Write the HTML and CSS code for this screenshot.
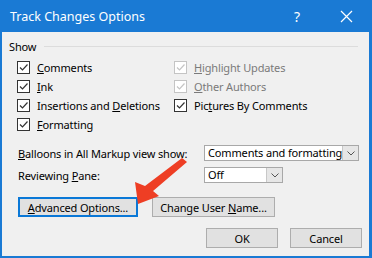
FILE: index.html
```html
<!DOCTYPE html>
<html lang="en">

<head>
  <meta charset="UTF-8">
  <title>Track Changes Options</title>
  <link rel="stylesheet" href="styles.css">
</head>

<body>
  <div class="dialog">
    <div class="titlebar">
      <span class="title">Track Changes Options</span>
      <span class="help">?</span>
      <span class="close">
        <svg width="13" height="13" viewBox="0 0 13 13"><path d="M1 1 L12 12 M12 1 L1 12" stroke="#fff" stroke-width="1.2" fill="none"/></svg>
      </span>
    </div>
    <div class="content">
      <div class="group-head">
        <span>Show</span>
        <div class="rule"></div>
      </div>
      <div class="checks">
        <label class="check"><span class="box"></span><span><u>C</u>omments</span></label>
        <label class="check off"><span class="box"></span><span><u>H</u>ighlight Updates</span></label>
        <label class="check"><span class="box"></span><span><u>I</u>nk</span></label>
        <label class="check off"><span class="box"></span><span><u>O</u>ther Authors</span></label>
        <label class="check"><span class="box"></span><span>Insertions and <u>D</u>eletions</span></label>
        <label class="check"><span class="box"></span><span>Pic<u>t</u>ures By Comments</span></label>
        <label class="check"><span class="box"></span><span><u>F</u>ormatting</span></label>
      </div>
      <div class="field first">
        <span class="field-label"><u>B</u>alloons in All Markup view show:</span>
        <div class="select wide"><span class="value">Comments and formatting</span><span class="drop"></span></div>
      </div>
      <div class="field">
        <span class="field-label">Reviewing <u>P</u>ane:</span>
        <div class="select narrow"><span class="value">Off</span><span class="drop"></span></div>
      </div>
      <div class="row-btns">
        <button class="btn default adv"><u>A</u>dvanced Options...</button>
        <button class="btn user">Change User <u>N</u>ame...</button>
      </div>
      <div class="footer">
        <button class="btn ok">OK</button>
        <button class="btn cancel">Cancel</button>
      </div>
    </div>
    <svg class="arrow" width="60" height="54" viewBox="0 0 60 54">
      <path d="M50 3 L55 7 L21 36 L27 41 L6 49 L3 27 L13 31 Z" fill="#ee3e24"/>
    </svg>
  </div>
</body>

</html>
```

FILE: styles.css
```css
* {
  padding: 0;
  margin: 0;
  box-sizing: border-box;
}

body {
  width: 372px;
  height: 258px;
  overflow: hidden;
  font-family: "Noto Sans", "Open Sans", sans-serif;
  font-size: 11px;
  letter-spacing: -0.15px;
  color: #000;
}

.dialog {
  position: relative;
  width: 372px;
  height: 258px;
  background-color: #f0f0f0;
  border: 2px solid #1a7ad4;
  border-top: 0;
  border-right-width: 3px;
  display: flex;
  flex-direction: column;
}

.titlebar {
  flex-shrink: 0;
  height: 32px;
  margin: 0 -3px 0 -2px;
  background-color: #1a7ad4;
  color: #fff;
  display: flex;
  align-items: center;
  padding-left: 10px;
}

.title {
  font-size: 12.5px;
  letter-spacing: 0;
  flex: 1;
}

.help {
  font-size: 14px;
  width: 20px;
  margin-right: 26px;
}

.close {
  width: 13px;
  margin-right: 19px;
  display: flex;
}

.content {
  padding: 6px 7px 0 7px;
  flex: 1;
  white-space: nowrap;
}

.group-head {
  display: flex;
  align-items: center;
  height: 16px;
}

.rule {
  flex: 1;
  height: 1px;
  background-color: #dcdcdc;
  margin-left: 8px;
  margin-right: 4px;
}

.checks {
  display: grid;
  grid-template-columns: 157px 1fr;
  grid-auto-rows: 19px;
  padding-left: 8px;
  margin-top: 4px;
}

.check {
  display: flex;
  align-items: center;
}

.box {
  flex-shrink: 0;
  width: 13px;
  height: 13px;
  border: 1px solid #333;
  background: #fff url("data:image/svg+xml,%3Csvg xmlns='http://www.w3.org/2000/svg' width='11' height='11'%3E%3Cpath d='M2 5.5 L4.5 8 L9.5 2.5' stroke='%23333' stroke-width='1.2' fill='none'/%3E%3C/svg%3E") no-repeat center;
  margin-right: 7px;
}

.check.off {
  color: #7a7a7a;
}

.check.off .box {
  border-color: #c4c4c4;
  background: #fff url("data:image/svg+xml,%3Csvg xmlns='http://www.w3.org/2000/svg' width='11' height='11'%3E%3Cpath d='M2 5.5 L4.5 8 L9.5 2.5' stroke='%23c4c4c4' stroke-width='1.2' fill='none'/%3E%3C/svg%3E") no-repeat center;
}

.field {
  display: flex;
  align-items: center;
  padding-left: 9px;
  margin-top: 6px;
}

.field.first {
  margin-top: 11px;
}

.field-label {
  width: 186px;
}

.select {
  display: flex;
  height: 16px;
  border: 1px solid #a8a8a8;
  background-color: #fff;
}

.select.wide {
  width: 155px;
}

.select.narrow {
  width: 79px;
}

.value {
  flex: 1;
  padding-left: 3px;
  line-height: 14px;
}

.drop {
  width: 16px;
  border-left: 1px solid #c8c8c8;
  background: #e6e6e6 url("data:image/svg+xml,%3Csvg xmlns='http://www.w3.org/2000/svg' width='8' height='5'%3E%3Cpath d='M0.5 0.5 L4 4 L7.5 0.5' stroke='%23555' fill='none'/%3E%3C/svg%3E") no-repeat center;
}

.btn {
  font-family: inherit;
  font-size: 11px;
  letter-spacing: -0.15px;
  height: 20px;
  background-color: #e1e1e1;
  border: 1px solid #adadad;
  color: #000;
}

.btn.default {
  border: 2px solid #0a78d7;
}

.row-btns {
  display: flex;
  gap: 14px;
  padding-left: 9px;
  margin-top: 14px;
}

.adv {
  width: 120px;
}

.user {
  width: 123px;
}

.footer {
  display: flex;
  justify-content: flex-end;
  gap: 12px;
  margin-top: 11px;
}

.ok,
.cancel {
  width: 72px;
}

.arrow {
  position: absolute;
  left: 130px;
  top: 155px;
}
```
